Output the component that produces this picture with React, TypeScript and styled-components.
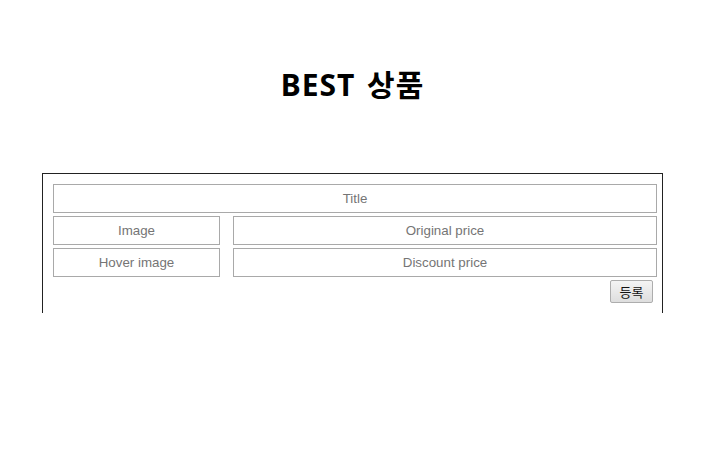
import React from "react";
import styled, { createGlobalStyle } from "styled-components";

const Global = createGlobalStyle`
  html, body { margin: 0; padding: 0; background: #fff; }
  body { font-family: "Liberation Sans", "Noto Sans CJK KR", sans-serif; }
`;

const Page = styled.div`
  width: 705px;
  padding-top: 60px;
`;

const Heading = styled.h1`
  margin: 0 0 63px;
  text-align: center;
  font-family: "Noto Sans", "Noto Sans CJK KR", sans-serif;
  font-weight: 700;
  font-size: 30px;
  line-height: 50px;
  color: #000;
  letter-spacing: 1px;
  word-spacing: 3px;
`;

const FormBox = styled.form`
  margin: 0 42px;
  height: 140px;
  box-sizing: border-box;
  border: 1px solid #222;
  border-bottom: none;
  padding: 10px 5px 0 10px;
  display: flex;
  flex-direction: column;
  gap: 3px;
`;

const Grid = styled.div`
  display: grid;
  grid-template-columns: 167px 1fr;
  column-gap: 13px;
  row-gap: 3px;
`;

const Field = styled.input`
  box-sizing: border-box;
  height: 29px;
  width: 100%;
  margin: 0;
  padding: 0 4px;
  border: 1px solid #a9a9a9;
  border-radius: 0;
  outline: none;
  text-align: center;
  font-family: "Liberation Sans", sans-serif;
  font-size: 13.33px;
  color: #222;
  background: #fff;
  &::placeholder { color: #757575; opacity: 1; }
`;

const Actions = styled.div`
  display: flex;
  justify-content: flex-end;
  padding-right: 4px;
`;

const SubmitButton = styled.button`
  box-sizing: border-box;
  width: 43px;
  height: 23px;
  margin: 0;
  padding: 0;
  border: 1px solid #adadad;
  border-radius: 2px;
  background: linear-gradient(#f4f4f4, #dedede);
  font-family: "Noto Sans CJK KR", sans-serif;
  font-size: 13px;
  line-height: 21px;
  color: #111;
`;

export default function App() {
  return (
    <>
      <Global />
      <Page>
        <Heading>BEST 상품</Heading>
        <FormBox onSubmit={(e) => e.preventDefault()}>
          <Field placeholder="Title" />
          <Grid>
            <Field placeholder="Image" />
            <Field placeholder="Original price" />
            <Field placeholder="Hover image" />
            <Field placeholder="Discount price" />
          </Grid>
          <Actions>
            <SubmitButton type="submit">등록</SubmitButton>
          </Actions>
        </FormBox>
      </Page>
    </>
  );
}
